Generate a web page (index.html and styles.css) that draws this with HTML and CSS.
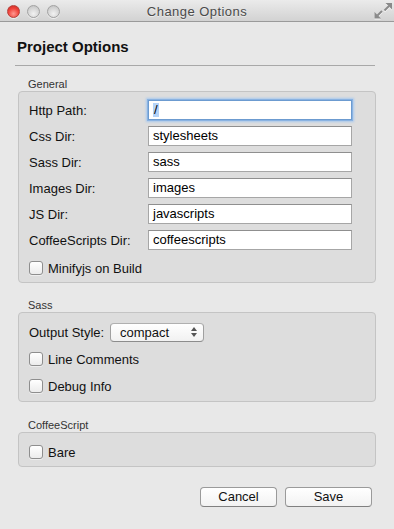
FILE: index.html
```html
<!DOCTYPE html>
<html>
<head>
<meta charset="utf-8">
<link rel="stylesheet" href="styles.css">
</head>
<body>
<div class="window">
  <div class="titlebar">
    <div class="lights">
      <span class="light red"></span>
      <span class="light"></span>
      <span class="light"></span>
    </div>
    <div class="title">Change Options</div>
    <svg class="resize" width="19" height="18" viewBox="0 0 19 18">
      <g fill="#ffffff" stroke="#ffffff" opacity="0.8" transform="translate(0,1)">
        <polygon points="18,1 11.5,1 18,7.5" stroke="none"/>
        <line x1="15" y1="4" x2="10.5" y2="8.5" stroke-width="2"/>
        <polygon points="0.5,16.5 0.5,10 7,16.5" stroke="none"/>
        <line x1="3.5" y1="13.5" x2="8" y2="9" stroke-width="2"/>
      </g>
      <g fill="#8a8a8a" stroke="#8a8a8a">
        <polygon points="18,1 11.5,1 18,7.5" stroke="none"/>
        <line x1="15" y1="4" x2="10.5" y2="8.5" stroke-width="2"/>
        <polygon points="0.5,16.5 0.5,10 7,16.5" stroke="none"/>
        <line x1="3.5" y1="13.5" x2="8" y2="9" stroke-width="2"/>
      </g>
    </svg>
  </div>
  <div class="content">
    <h1 class="heading">Project Options</h1>
    <div class="rule"></div>

    <section class="group group-general">
      <div class="group-label">General</div>
      <div class="box box-general">
        <div class="fields">
          <span class="field-label">Http Path:</span>
          <div class="input focused"><span class="sel">/</span></div>
          <span class="field-label">Css Dir:</span>
          <div class="input">stylesheets</div>
          <span class="field-label">Sass Dir:</span>
          <div class="input">sass</div>
          <span class="field-label">Images Dir:</span>
          <div class="input">images</div>
          <span class="field-label">JS Dir:</span>
          <div class="input">javascripts</div>
          <span class="field-label">CoffeeScripts Dir:</span>
          <div class="input">coffeescripts</div>
        </div>
        <div class="check check-minify"><span class="cb"></span>Minifyjs on Build</div>
      </div>
    </section>

    <section class="group group-sass">
      <div class="group-label">Sass</div>
      <div class="box box-sass">
        <div class="select-row">
          <span class="field-label">Output Style:</span>
          <div class="select">
            <span>compact</span>
            <svg class="arrows" width="6" height="10" viewBox="0 0 6 10">
              <polygon points="3,0 6,4 0,4" fill="#555"/>
              <polygon points="0,6 6,6 3,10" fill="#555"/>
            </svg>
          </div>
        </div>
        <div class="check check-line"><span class="cb"></span>Line Comments</div>
        <div class="check check-debug"><span class="cb"></span>Debug Info</div>
      </div>
    </section>

    <section class="group group-coffee">
      <div class="group-label">CoffeeScript</div>
      <div class="box box-coffee">
        <div class="check"><span class="cb"></span>Bare</div>
      </div>
    </section>

    <div class="buttons">
      <button class="btn btn-cancel">Cancel</button>
      <button class="btn btn-save">Save</button>
    </div>
  </div>
</div>
</body>
</html>
```
FILE: styles.css
```css
* { box-sizing: border-box; }
html, body {
  margin: 0;
  padding: 0;
  background: #e8e8e8;
}
body {
  font-family: "Liberation Sans", Arial, sans-serif;
  font-size: 13px;
  color: #111;
}
.window {
  width: 394px;
  height: 529px;
  background: #e8e8e8;
  overflow: hidden;
}
.titlebar {
  height: 22px;
  border-bottom: 1px solid #9a9a9a;
  background: linear-gradient(#ebebeb, #d2d2d2);
  display: grid;
  grid-template-columns: 1fr auto 1fr;
  align-items: start;
}
.lights {
  display: flex;
  gap: 7px;
  padding: 5px 0 0 7px;
}
.light {
  width: 13px;
  height: 13px;
  border-radius: 50%;
  border: 1px solid #a2a2a2;
  background: radial-gradient(circle at 50% 70%, #f2f2f2 0%, #d6d6d6 55%, #bcbcbc 100%);
  box-shadow: 0 1px 0 rgba(255,255,255,0.6);
}
.light.red {
  border-color: #b5403a;
  background: radial-gradient(circle at 50% 70%, #ff9a92 0%, #f0433b 55%, #c42820 100%);
}
.title {
  font-size: 13px;
  letter-spacing: 0.45px;
  color: #4a4a4a;
  line-height: 19px;
  padding-top: 2px;
  text-shadow: 0 1px 0 rgba(255,255,255,0.5);
}
.resize {
  justify-self: end;
  margin: 2px 1px 0 0;
}
.content {
  padding: 0 22px 0 18px;
}
.heading {
  margin: 16px 0 0 -1px;
  font-size: 15px;
  line-height: 18px;
  font-weight: bold;
  color: #111;
}
.rule {
  margin: 9px 0 0 -3px;
  width: 360px;
  height: 1px;
  background: #a8a8a8;
}
.group-label {
  font-size: 11px;
  line-height: 13px;
  color: #333;
  padding-left: 10px;
}
.group-general { margin-top: 12px; }
.group-sass { margin-top: 16px; }
.group-coffee { margin-top: 17px; }
.box {
  width: 358px;
  border: 1px solid #c4c4c4;
  border-radius: 4px;
  background: #dddddd;
  padding: 8px 10px 4px 10px;
}
.box-sass {
  padding: 9px 10px 5px 10px;
  display: flex;
  flex-direction: column;
  gap: 7px;
}
.box-coffee {
  padding: 9px 10px 4px 10px;
}
.fields {
  display: grid;
  grid-template-columns: 119px 204px;
  grid-auto-rows: 20px;
  row-gap: 6px;
  align-items: center;
}
.field-label {
  color: #111;
  white-space: nowrap;
}
.input {
  height: 20px;
  border: 1px solid #a6a6a6;
  border-top-color: #8f8f8f;
  background: #fff;
  padding: 0 4px;
  line-height: 18px;
  color: #000;
  white-space: nowrap;
}
.input.focused {
  border-color: #6c9bd0;
  box-shadow: 0 0 0 1px #8ab3e2, 0 0 2px 2px #a9c9ee;
}
.sel {
  background: #b4d3f8;
  display: inline-block;
  line-height: 14px;
  padding: 0 1px;
}
.check {
  display: flex;
  align-items: center;
  gap: 5px;
  height: 20px;
  color: #111;
}
.check-minify {
  margin-top: 8px;
}
.cb {
  width: 14px;
  height: 14px;
  border: 1px solid #8e8e8e;
  border-radius: 3px;
  background: linear-gradient(#ffffff, #ececec);
  box-shadow: 0 1px 0 rgba(255,255,255,0.5);
  flex: none;
}
.select-row {
  display: flex;
  align-items: center;
  gap: 6px;
  height: 20px;
}
.select-row .field-label {
  flex: none;
  width: 75px;
}
.select {
  flex: none;
  width: 94px;
  height: 19px;
  border: 1px solid #a0a0a0;
  border-top-color: #b0b0b0;
  border-bottom-color: #8c8c8c;
  border-radius: 4px;
  background: linear-gradient(#ffffff, #f1f1f1);
  display: flex;
  align-items: center;
  justify-content: space-between;
  padding: 0 6px 0 9px;
  color: #111;
}
.buttons {
  margin-top: 20px;
  display: flex;
  justify-content: flex-end;
  gap: 8px;
}
.btn {
  height: 20px;
  border: 1px solid #9a9a9a;
  border-bottom-color: #808080;
  border-radius: 4px;
  background: linear-gradient(#ffffff, #f2f2f2);
  font-family: "Liberation Sans", Arial, sans-serif;
  font-size: 13px;
  color: #111;
  padding: 0;
  line-height: 18px;
}
.btn-cancel { width: 77px; }
.btn-save { width: 87px; }
```
